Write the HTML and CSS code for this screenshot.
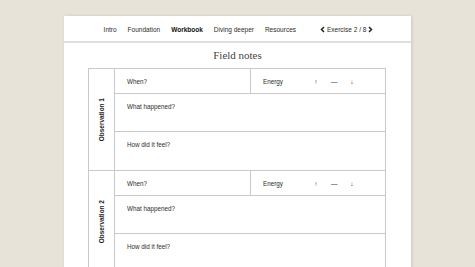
FILE: index.html
```html
<!DOCTYPE html>
<html lang="en">
<head>
  <meta charset="UTF-8" />
  <meta name="viewport" content="width=device-width, initial-scale=1" />
  <title>Field notes</title>
  <link rel="stylesheet" href="styles.css">
</head>
<body>
  <div class="page">
    <nav class="topnav">
      <div class="links">
        <span>Intro</span>
        <span>Foundation</span>
        <span class="active">Workbook</span>
        <span>Diving deeper</span>
        <span>Resources</span>
      </div>
      <div class="pager">
        <svg width="5" height="7" viewBox="0 0 5 7"><path d="M4 1 L1.5 3.5 L4 6" fill="none" stroke="#222" stroke-width="1.5"/></svg>
        <span>Exercise 2 / 8</span>
        <svg width="5" height="7" viewBox="0 0 5 7"><path d="M1 1 L3.5 3.5 L1 6" fill="none" stroke="#222" stroke-width="1.5"/></svg>
      </div>
    </nav>

    <h1>Field notes</h1>

    <div class="sheet">
      <section class="obs">
        <div class="obs-label"><span>Observation 1</span></div>
        <div class="obs-fields">
          <div class="row row-top">
            <div class="cell">When?</div>
            <div class="cell energy">Energy <span class="arrows"><i>↑</i><i>—</i><i>↓</i></span></div>
          </div>
          <div class="row row-tall">What happened?</div>
          <div class="row row-tall">How did it feel?</div>
        </div>
      </section>
      <section class="obs">
        <div class="obs-label"><span>Observation 2</span></div>
        <div class="obs-fields">
          <div class="row row-top">
            <div class="cell">When?</div>
            <div class="cell energy">Energy <span class="arrows"><i>↑</i><i>—</i><i>↓</i></span></div>
          </div>
          <div class="row row-tall">What happened?</div>
          <div class="row row-tall">How did it feel?</div>
        </div>
      </section>
    </div>
  </div>
</body>
</html>
```

FILE: styles.css
```css
:root {
  --bg: #e7e3d9;
  --line: #c9c9c9;
  --text: #2b2b2b;
}
body {
  margin: 0;
  background: var(--bg);
  font-family: 'Liberation Sans', Arial, sans-serif;
  color: var(--text);
  overflow: hidden;
}
.page {
  width: 347px;
  height: 300px;
  margin: 16px auto 0;
  background: #fff;
  box-shadow: 1px 0 3px rgba(0,0,0,0.12);
}
.topnav {
  height: 25px;
  box-sizing: border-box;
  padding: 1px 0 0 2px;
  border-bottom: 2px solid #dedede;
  display: flex;
  align-items: center;
  justify-content: center;
  gap: 24px;
  font-size: 6.5px;
}
.topnav {
  height: 27px;
}
.links {
  display: flex;
  gap: 11px;
  color: #2b2b2b;
}
.links .active {
  font-weight: bold;
  color: #111;
}
.pager {
  display: flex;
  align-items: center;
  gap: 2px;
  color: #2b2b2b;
}
h1 {
  margin: 0;
  height: 25px;
  line-height: 24px;
  text-align: center;
  font-family: 'Liberation Serif', serif;
  font-weight: normal;
  font-size: 11px;
  color: #444;
}
.sheet {
  width: 296px;
  margin-left: 24px;
  border: 1px solid var(--line);
}
.obs {
  display: grid;
  grid-template-columns: 26px 1fr;
  border-bottom: 1px solid var(--line);
}
.obs-label {
  border-right: 1px solid var(--line);
  display: flex;
  align-items: center;
  justify-content: center;
}
.obs-label span {
  writing-mode: vertical-rl;
  transform: rotate(180deg);
  font-size: 6.5px;
  font-weight: bold;
  color: #222;
}
.row {
  border-bottom: 1px solid var(--line);
  font-size: 6.3px;
  color: #2b2b2b;
}
.row:last-child {
  border-bottom: none;
}
.row-top {
  height: 24px;
  display: grid;
  grid-template-columns: 1fr 1fr;
}
.cell {
  display: flex;
  align-items: center;
  padding-left: 12px;
}
.energy {
  border-left: 1px solid var(--line);
}
.arrows {
  display: flex;
  margin-left: 30px;
  gap: 12px;
  color: #333;
}
.arrows i {
  font-style: normal;
  width: 6px;
  text-align: center;
  font-size: 6.5px;
}
.row-tall {
  height: 38px;
  padding: 9px 0 0 12px;
  box-sizing: border-box;
  line-height: 8px;
}
```
